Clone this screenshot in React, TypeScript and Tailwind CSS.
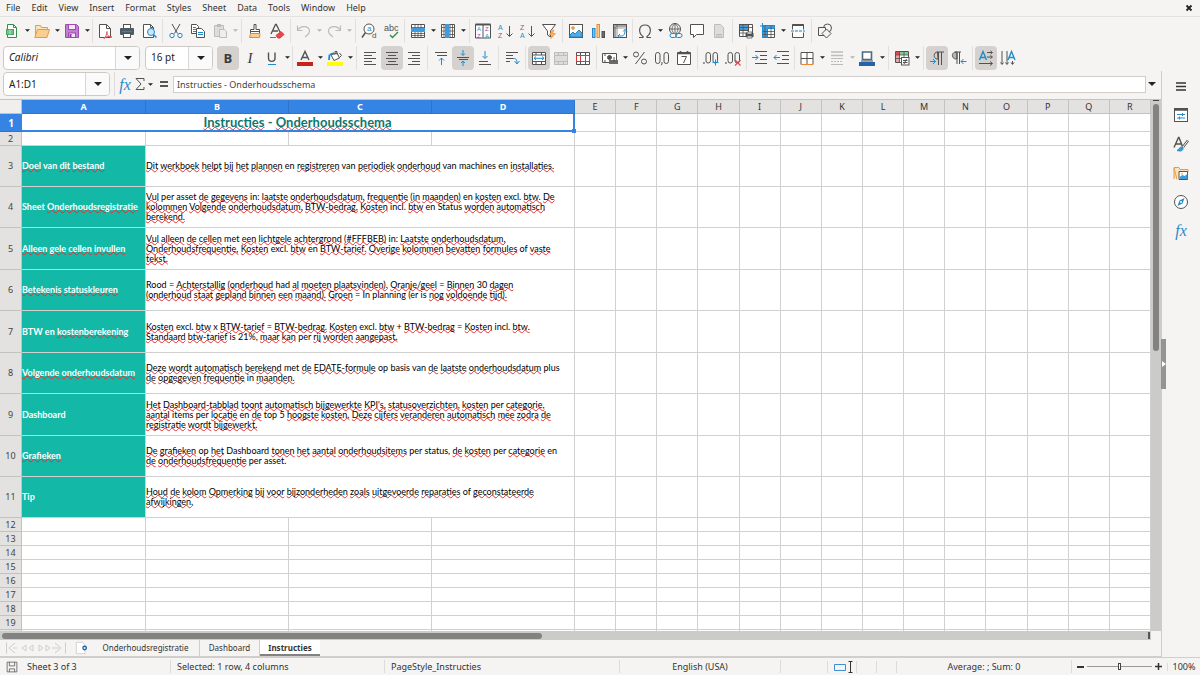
import React from "react";

type Kids = { children?: React.ReactNode };

const K = "#525250";
const B = "#1e8bcd";
const G = "#bcbcba";

function Glyph({ children, className = "h-4 w-4" }: Kids & { className?: string }) {
  return (
    <svg viewBox="0 0 16 16" className={className + " overflow-visible"} fill="none" stroke={K} strokeWidth="1" aria-hidden="true">
      {children}
    </svg>
  );
}

function T({ x, y, s, c, children }: Kids & { x: number; y: number; s: number; c: string }) {
  return (
    <text x={x} y={y} fontSize={s} fill={c} stroke="none" fontFamily="Liberation Sans, sans-serif">
      {children}
    </text>
  );
}

const icons: Record<string, React.ReactNode> = {
  New: (
    <>
      <path d="M3.500 1.500h6l3 3v10h-9z" fill="#fff" stroke="#309048" />
      <path d="M9.500 1.500v3h3" stroke="#309048" />
      <rect x="2" y="6" width="8" height="6" fill="#41a85f" stroke="none" />
      <path d="M3 8h6M3 10h6M6 6.500v5" stroke="#d7f0de" strokeWidth=".7" />
    </>
  ),
  Open: (
    <>
      <path d="M1.500 14V2.500h5l1 2h6v3" fill="#fbe3bd" stroke="#eb9a3c" />
      <path d="M.8 14.500l2.700-8h12l-2.500 8z" fill="#f8cf8f" stroke="#eb9a3c" />
    </>
  ),
  Save: (
    <>
      <path d="M1.500 1.500h11l2 2v11h-13z" fill="#c07fd0" stroke="#a04bb4" />
      <rect x="4.500" y="1.500" width="7" height="5" fill="#f4e8f6" stroke="#a04bb4" />
      <rect x="4.500" y="10" width="7" height="4.500" fill="#f4e8f6" stroke="#a04bb4" />
      <rect x="5.500" y="11" width="2" height="3" fill="#92379f" stroke="none" />
    </>
  ),
  "Export as PDF": (
    <>
      <path d="M2.500 1.500h7l4 4v9h-11z" fill="#fff" />
      <path d="M9.500 1.500v4h4" />
      <path d="M7 15.500c2-2 3.200-5 3-7-.8 3 2 6 5 5.500-3-1.300-6-.5-8 1.500z" fill="#fff" stroke="#e0555c" />
    </>
  ),
  Print: (
    <>
      <rect x="4.500" y="1.500" width="7" height="4" fill="#fff" />
      <rect x="1" y="5" width="14" height="7" rx="1" fill="#4f5a62" stroke="none" />
      <path d="M3 8.500h10" stroke="#1e8bcd" strokeWidth="1.200" />
      <rect x="4.500" y="10.500" width="7" height="4" fill="#fff" />
    </>
  ),
  "Print Preview": (
    <>
      <path d="M2.500 1.500h7l3 3v10h-10z" fill="#fff" />
      <path d="M9.500 1.500v3h3" />
      <circle cx="10" cy="9" r="3.500" fill="#cfe5f5" stroke={B} />
      <path d="M12.500 11.500l3 3" stroke={B} strokeWidth="1.500" />
    </>
  ),
  Cut: (
    <>
      <path d="M4 1l5.500 9.500M12 1L6.500 10.500" />
      <circle cx="4" cy="12.500" r="2.200" stroke={B} />
      <circle cx="12" cy="12.500" r="2.200" stroke={B} />
    </>
  ),
  Copy: (
    <>
      <path d="M1.500 1.500h5l2 2v7h-7z" fill="#fff" />
      <path d="M3 4.500h3M3 6.500h4M3 8.500h3" stroke={B} />
      <path d="M6.500 5.500h5l3 3v6h-8z" fill="#fff" />
      <path d="M8 9.500h5M8 11.500h5" stroke={B} />
    </>
  ),
  Paste: (
    <>
      <path d="M2.500 2.500h9v11h-9z" fill="#dedddb" stroke={G} />
      <rect x="5" y="1" width="4" height="3" fill={G} stroke="none" />
      <path d="M7.500 6.500h5l2 2v6h-7z" fill="#eee" stroke={G} />
    </>
  ),
  "Clone Formatting": (
    <>
      <path d="M7 1.500h2v5h3.500v4h-9v-4H7z" fill="#fff" />
      <path d="M3.500 8.500h9" />
      <path d="M3.500 10.500l-1 4h10l.5-4z" fill="#f8cf8f" stroke="#ed8733" />
    </>
  ),
  "Clear Formatting": (
    <>
      <path d="M2 11L6.500 1.500h.8L11 9M4 8h5" strokeWidth="1.300" />
      <path d="M1 14.500h6" stroke={B} />
      <path d="M7 12.500l5-4 3 3-4 3.500H9z" fill="#e8474c" stroke="#d9363e" />
    </>
  ),
  Undo: <path d="M1.500 2.500v5h5M1.500 7.500c3-5.500 11-5 12 0 .5 3-2 4.500-4.500 6.500" stroke={G} strokeWidth="1.200" />,
  Redo: <path d="M14.500 2.500v5h-5M14.500 7.500c-3-5.500-11-5-12 0-.5 3 2 4.500 4.500 6.500" stroke={G} strokeWidth="1.200" />,
  "Find and Replace": (
    <>
      <circle cx="8" cy="6" r="5" fill="#fff" />
      <path d="M4.500 9.500L1 14.500" strokeWidth="1.500" />
      <T x={6} y={8} s={8} c={B}>a</T>
      <T x={11} y={15} s={8} c={K}>d</T>
    </>
  ),
  Spelling: (
    <>
      <T x={1} y={7.5} s={9} c={K}>abc</T>
      <path d="M7 12l2.500 2.500L15 9" stroke="#309048" strokeWidth="1.400" />
    </>
  ),
  Row: (
    <>
      <path d="M1.500 1.500h13v13h-13z" fill="#fff" />
      <path d="M1.500 4.500h13M1.500 10.500h13M1.500 12.500h13M5 1.500v13M8 1.500v13M11 1.500v13" strokeWidth=".8" />
      <rect x="1" y="5" width="14" height="4" fill="#3f9bdc" stroke="none" />
    </>
  ),
  Column: (
    <>
      <path d="M1.500 1.500h13v13h-13z" fill="#fff" />
      <path d="M1.500 4.500h13M1.500 8h13M1.500 11.500h13M4 1.500v13M10 1.500v13M12.500 1.500v13" strokeWidth=".8" />
      <rect x="5" y="1" width="4.500" height="14" fill="#3f9bdc" stroke="none" />
    </>
  ),
  Sort: (
    <>
      <path d="M.5 1.500h15v13.500H.5zM8 1.500v13" fill="#fff" />
      <path d="M.5 1.500h15" strokeWidth="2" />
      <T x={2} y={8} s={6} c={B}>A</T>
      <T x={2} y={14.5} s={6} c="#b03fb5">Z</T>
      <T x={10} y={8} s={6} c="#b03fb5">Z</T>
      <T x={10} y={14.5} s={6} c={B}>A</T>
    </>
  ),
  "Sort Ascending": (
    <>
      <T x={1} y={6.5} s={7} c={B}>A</T>
      <T x={1} y={15} s={7} c="#b03fb5">Z</T>
      <path d="M12.500 3v10M9.500 10.500l3 3 3-3" />
    </>
  ),
  "Sort Descending": (
    <>
      <T x={1} y={6.5} s={7} c="#b03fb5">Z</T>
      <T x={1} y={15} s={7} c={B}>A</T>
      <path d="M12.500 3v10M9.500 10.500l3 3 3-3" />
    </>
  ),
  AutoFilter: (
    <>
      <path d="M1.500 1.500h13L9.500 8v6l-3-2V8z" fill="#fff" />
      <path d="M12 7l-4 5h3l-1 3.500 4.500-5h-3l1.500-3.500z" fill="#f8b35b" stroke="#ed8733" strokeWidth=".6" />
    </>
  ),
  Image: (
    <>
      <rect x="1.500" y="1.500" width="13" height="13" fill="#fff" />
      <circle cx="5" cy="5" r="1.300" fill="#f8b35b" stroke="#ed8733" />
      <path d="M2 14v-2l3-3 2 2 4-4 3 3v4z" fill="#5da7dc" stroke={B} />
    </>
  ),
  Chart: (
    <>
      <rect x="2.500" y="5.500" width="2.500" height="9" fill="#83beec" stroke={B} />
      <rect x="7" y="1.500" width="2.500" height="13" fill="#f8cf8f" stroke="#ed8733" />
      <rect x="12" y="8.500" width="2.500" height="6" fill="#6a6a68" />
    </>
  ),
  "Pivot Table": (
    <>
      <rect x="1.500" y="1.500" width="13" height="13" fill="#fff" />
      <path d="M2 3h12M3 2v12" stroke="#a3a3a1" strokeWidth="2" />
      <path d="M1.500 5h13M5 1.500v13" strokeWidth=".6" />
      <path d="M6 13h3.500c3 0 3.500-3 3.500-6.500M8 11l-2 2 2 2M11 8.500l2-2 2 2" stroke={B} />
    </>
  ),
  Symbol: <path d="M2 14.500h4v-1C1 10 1.500 2 8 2s7 8 2 11.500v1h4" strokeWidth="1.200" />,
  Hyperlink: (
    <>
      <circle cx="8" cy="6" r="5.500" />
      <path d="M2.500 6h11M8 .5v11M8 .5C4 4 4 8 8 11.500M8 .5c4 3.500 4 7.500 0 11" strokeWidth=".8" />
      <rect x="3" y="10.500" width="6.500" height="4" rx="2" fill="#f5f4f2" stroke={B} />
      <rect x="8.500" y="10.500" width="6.500" height="4" rx="2" stroke={B} />
    </>
  ),
  Comment: <path d="M1.500 1.500h13v10h-7l-3 3v-3h-3z" fill="#fff" />,
  "Headers and Footers": (
    <>
      <path d="M3.500 1.500h6l3 3v10h-9z" fill="#dedddb" stroke={G} />
      <path d="M5 11.500h6M5 13h6" stroke={G} />
    </>
  ),
  "Print Area": (
    <>
      <path d="M1.500 1.500h13v12h-13z" fill="#fff" />
      <rect x="1.500" y="1.500" width="9" height="6" fill="#3f9bdc" />
      <path d="M1.500 4.500h13M1.500 10h13M5 1.500v12M10.500 1.500v12" strokeWidth=".8" />
      <rect x="7.500" y="10" width="8" height="4" fill="#4a5258" stroke="none" />
      <path d="M9 9h5v2H9zM9 13h5v2H9z" fill="#fff" strokeWidth=".8" />
    </>
  ),
  "Freeze Rows and Columns": (
    <>
      <path d="M2.500 2.500h12v12h-12z" fill="#fff" />
      <path d="M2.500 2.500h12v3h-7v9h-5z" fill="#3f9bdc" stroke={B} />
      <path d="M2.500 8.500h12M2.500 11.500h12M11 2.500v12M5 2.500v12" strokeWidth=".8" />
      <path d="M0 3h5M2.500 0v5" stroke={B} />
    </>
  ),
  "Split Window": (
    <>
      <path d="M2.500 6.500v-5h11v5M2.500 9.500v5h11v-5" fill="#fff" />
      <path d="M2.500 2h11" strokeWidth="2" />
      <path d="M1 8h14" stroke={B} strokeDasharray="3 1" />
    </>
  ),
  "Show Draw Functions": (
    <>
      <circle cx="10.500" cy="5" r="4" />
      <path d="M1.500 4.500h7v8h-7z" fill="#f5f4f2" />
      <path d="M9.500 6l4.500 4.500-4.500 4.500L5 10.500z" fill="#f5f4f2" />
    </>
  ),
  Bold: <text x="3.500" y="13" fontSize="13" fontWeight="700" fill="#3c3c3a" stroke="none" fontFamily="Open Sans, sans-serif">B</text>,
  Italic: <text x="5.500" y="13" fontSize="15" fontStyle="italic" fill="#3c3c3a" stroke="none" fontFamily="Liberation Serif, serif">I</text>,
  Underline: (
    <>
      <path d="M4.500 2.500v5.500c0 4.500 6.500 4.500 6.500 0V2.500" strokeWidth="1.400" />
      <path d="M4 14.500h8" stroke={B} />
    </>
  ),
  "Font Color": (
    <>
      <path d="M4 10L8 1.500 12 10M5.500 7.500h5" strokeWidth="1.400" />
      <rect x="0" y="12" width="16" height="4" fill="#c9211e" stroke="none" />
    </>
  ),
  "Highlighting Color": (
    <>
      <path d="M4 5l6-2 2.500 5-5.500 2.500z" fill="#fff" />
      <path d="M2.500 4.500L2 10M3 4.500l4-1.500" stroke={B} strokeWidth="1.800" />
      <path d="M8 4.500V1.500h2v3M12.500 3l2 2.500-2 2" />
      <rect x="0" y="12" width="16" height="4" fill="#ffff00" stroke="none" />
    </>
  ),
  "Align Left": <path d="M2 2.500h12M2 5.500h8M2 8.500h12M2 11.500h8M2 14.500h12" />,
  "Center Horizontally": <path d="M2 2.500h12M4 5.500h8M2 8.500h12M4 11.500h8M2 14.500h12" />,
  "Align Right": <path d="M2 2.500h12M6 5.500h8M2 8.500h12M6 11.500h8M2 14.500h12" />,
  "Align Top": (
    <>
      <path d="M2 2.500h12M4 5.500h10" />
      <path d="M8.500 15V8M6 10.500L8.500 8l2.500 2.500" stroke={B} />
    </>
  ),
  "Center Vertically": (
    <>
      <path d="M2 7.500h12M4 9.500h9" />
      <path d="M8 0v5M6 3.500l2 2 2-2M8 16v-5M6 13l2-2 2 2" stroke={B} />
    </>
  ),
  "Align Bottom": (
    <>
      <path d="M2 11.500h9M2 14.500h12" />
      <path d="M8 1v7M5.500 6L8 8.500 10.500 6" stroke={B} />
    </>
  ),
  "Wrap Text": (
    <>
      <path d="M2 2.500h12M2 5.500h7M2 8.500h7M2 11.500h4" />
      <path d="M9 8.500h1.500c1 0 2.500.5 2.500 4.500M10.500 11l2.500 3 2.500-3" stroke={B} />
    </>
  ),
  "Merge and Center Cells": (
    <>
      <path d="M1.500 2.500h13v12h-13z" fill="#fff" />
      <path d="M1.500 5h13M1.500 11.500h13M5 2.500V5M10.500 2.500V5M5 11.500v3M10.500 11.500v3" />
      <path d="M3 8.300h10M5 6.500L3 8.300 5 10M11 6.500l2 1.800L11 10" stroke={B} />
    </>
  ),
  "Merge Cells": (
    <>
      <path d="M1.500 2.500h13v12h-13z" fill="#dedddb" stroke={G} />
      <path d="M1.500 5.500h13M1.500 11.500h13M5.500 2.500v3M10.500 2.500v3M5.500 11.500v3M10.500 11.500v3" stroke={G} />
    </>
  ),
  "Unmerge Cells": (
    <>
      <path d="M1.500 2.500h13v12h-13z" fill="#fff" />
      <path d="M1.500 5.500h13M1.500 11.500h13M5.500 2.500v3M10.500 2.500v3M5.500 11.500v3M10.500 11.500v3" />
      <path d="M1.500 5.500h13v6h-13zM5.500 5.500v6M10.500 5.500v6" stroke="#d9363e" />
    </>
  ),
  Currency: (
    <>
      <path d="M.5 3.500h14v9H.5z" fill="#fff" />
      <circle cx="7.500" cy="7.500" r="2" fill={K} />
      <path d="M7 10h9v4H7z" fill="#6a6a68" stroke="none" />
      <path d="M12 7v5M2 5h2M2 11h2" />
    </>
  ),
  Percent: (
    <>
      <circle cx="4" cy="4.500" r="2.500" />
      <circle cx="12" cy="11.500" r="2.500" />
      <path d="M12.500 2L3.500 14" />
    </>
  ),
  Number: (
    <>
      <rect x="1.500" y="2.500" width="4.500" height="11" rx="2.200" />
      <rect x="10" y="2.500" width="4.500" height="11" rx="2.200" />
      <path d="M8 12v2l-.8 1.200" />
    </>
  ),
  Date: (
    <>
      <path d="M1.500 2.500h13v12h-13z" fill="#fff" />
      <path d="M1.500 3.500h13M4.500 1v3M11.500 1v3" strokeWidth="1.600" />
      <path d="M5.500 6.500h5l-3 6.500" />
    </>
  ),
  "Add Decimal Place": (
    <>
      <rect x="3" y="2.500" width="4.500" height="10.500" rx="2.200" />
      <rect x="10" y="2.500" width="4.500" height="10.500" rx="2.200" />
      <path d="M.2 13h1.500" strokeWidth="1.400" />
      <path d="M12.500 9.500v6M9.500 12.500h6" stroke={B} />
    </>
  ),
  "Delete Decimal Place": (
    <>
      <rect x="3" y="2.500" width="4.500" height="10.500" rx="2.200" />
      <rect x="10" y="2.500" width="4.500" height="10.500" rx="2.200" />
      <path d="M.2 13h1.500" strokeWidth="1.400" />
      <path d="M10 10l5.500 5.500M15.500 10L10 15.500" stroke="#e8474c" strokeWidth="1.200" />
    </>
  ),
  "Increase Indent": (
    <>
      <path d="M3 1.500h12M8 5.500h7M8 9.500h7M3 13.500h12" />
      <path d="M0 7.500h6M3.500 5L6 7.500 3.500 10" stroke={B} />
    </>
  ),
  "Decrease Indent": (
    <>
      <path d="M3 1.500h12M8 5.500h7M8 9.500h7M3 13.500h12" />
      <path d="M0 7.500h6M2.500 5L0 7.500 2.500 10" stroke={B} />
    </>
  ),
  Borders: (
    <>
      <path d="M2 2.500h12v12H2z" fill="#fff" />
      <path d="M8 2.500v12M2 8.500h12" />
      <path d="M2 14.500h12" stroke="#ed8733" />
    </>
  ),
  "Border Style": (
    <>
      <path d="M2 2h12M2 5.500h12" stroke={G} strokeWidth="1.500" />
      <path d="M2 8.500h12M2 14.500h12" stroke={G} />
      <path d="M2 11.500h12" stroke={G} strokeDasharray="2 1" />
    </>
  ),
  "Border Color": (
    <>
      <path d="M3.500 2h9v7.500h-9z" fill="#fff" stroke="#4a6a85" strokeWidth="1.600" />
      <path d="M2 11h12" stroke={K} />
      <rect x="0" y="12" width="16" height="4" fill="#2563a8" stroke="none" />
    </>
  ),
  "Conditional Formatting": (
    <>
      <path d="M1.500 1.500h13v11h-13z" fill="#fff" />
      <rect x="2" y="2" width="4" height="3" fill="#e8474c" stroke="none" />
      <rect x="6" y="2" width="8" height="3" fill="#83c995" stroke="none" />
      <rect x="2" y="5" width="4" height="7" fill="#e9a3a3" stroke="none" />
      <path d="M1.500 5h13M1.500 8.500h13M5.500 1.500v11M10 1.500v11" strokeWidth=".8" />
      <rect x="7.500" y="7.500" width="7.500" height="7.500" fill="#fff" />
      <path d="M9 10.500h4.500M9 12.500h4.500M12.500 9l-2.500 5" />
    </>
  ),
  "Left to Right": (
    <>
      <path d="M8 2h7M9.500 2v13M12.500 2v13M9 9C4 9.500 4 2 8.500 2z" />
      <path d="M1 11.500h5.500M4 9l2.500 2.500L4 14" stroke={B} />
    </>
  ),
  "Right to Left": (
    <>
      <path d="M6 2v7C0 9.500 0 2 5 2z" fill="#b5b5b3" />
      <path d="M4 2h6M6 2v12M8.500 2v12" />
      <path d="M10 11.500h5.500M12.500 9L10 11.500l2.500 2.500" stroke={B} />
    </>
  ),
  "Text Horizontal": (
    <>
      <path d="M1.500 10L5 1.500 8.500 10M2.500 7.500h5" stroke={B} strokeWidth="1.400" />
      <path d="M9 2.500h5M9 7h5M1 13.500h13M12.500 1L14.500 2.500 12.500 4M12.500 5.500l2 1.500-2 1.500M12 11.500l2.500 2-2.500 2" />
    </>
  ),
  "Text Vertical": (
    <>
      <path d="M8 10l3.500-8.500L15 10M9 7.500h5" stroke={B} strokeWidth="1.400" />
      <path d="M2 1v13M7 1v13M12.500 11v3M.5 12.500l1.500 2 1.500-2M5.500 12.500l1.500 2 1.500-2M11 12.500l1.500 2 1.500-2" />
    </>
  ),
  Properties: (
    <>
      <rect x="1.500" y="1.500" width="13" height="13" fill="#fff" />
      <path d="M1.500 2.500h13" strokeWidth="2.500" />
      <path d="M4 7.500h8M4 11h8" stroke={B} />
      <path d="M9.500 6v3M6.500 9.500v3" stroke={B} />
    </>
  ),
  Styles: (
    <>
      <path d="M1 11.500L5.500 1.500h.5l3.500 9M3 8h6" strokeWidth="1.400" />
      <path d="M15 4.500L10 11" strokeWidth="2.500" />
      <path d="M15 4.500L10 11" stroke="#fff" strokeWidth="1" />
      <path d="M4 14.500c2-.5 2-3.500 5-3.500 2 1 1 4-2 4z" fill="#3f9bdc" stroke={B} />
    </>
  ),
  Gallery: (
    <>
      <path d="M1 14V2.500h5l1 2h8V7" fill="#fbe3bd" stroke="#eb9a3c" />
      <path d="M1 3l3 11.500" stroke="#eb9a3c" />
      <path d="M6 6.500h8.500v8H6z" fill="#fff" />
      <path d="M6.500 14v-2l3-2 2 1 3-2v5z" fill="#3f9bdc" stroke="none" />
      <circle cx="9" cy="9" r=".8" fill="#ed8733" stroke="none" />
    </>
  ),
  Navigator: (
    <>
      <circle cx="8" cy="8" r="6.500" fill="#fff" />
      <path d="M11.500 4L9.500 9.500 4.500 12l2-5.500z" fill="#1e8bcd" stroke="none" />
      <circle cx="8" cy="8" r="1" fill="#fff" stroke="none" />
    </>
  ),
};

function Tool({ name, active, caret, dim }: { name: string; active?: boolean; caret?: boolean; dim?: boolean }) {
  return (
    <>
      <button
        type="button"
        aria-label={name}
        className={active ? "flex h-6 w-[22px] shrink-0 items-center justify-center rounded-sm bg-[#d4d1ce]" : "flex h-6 w-[22px] shrink-0 items-center justify-center"}
      >
        <Glyph>{icons[name]}</Glyph>
      </button>
      {caret && (
        <button type="button" aria-label={name + " options"} className="flex h-6 w-2 shrink-0 items-center justify-center">
          <Caret dim={dim} />
        </button>
      )}
    </>
  );
}

function Caret({ dim, big }: { dim?: boolean; big?: boolean }) {
  return (
    <svg viewBox="0 0 8 4" className={big ? "h-1 w-2" : "h-[3px] w-[5px]"} fill={dim ? "#b5b5b3" : "#222"} aria-hidden="true">
      <path d="M0 0h8L4 4z" />
    </svg>
  );
}

function Sep({ tight }: { tight?: boolean }) {
  return <div className={(tight ? "mx-px" : "mx-0.5") + " h-6 w-px shrink-0 bg-[#e2e0de]"} />;
}

function Combo({ label, value, width, italic }: { label: string; value: string; width: string; italic?: boolean }) {
  return (
    <div className={width + " flex h-6 shrink-0 overflow-hidden rounded border border-[#cdc9c5] bg-white"}>
      <input
        aria-label={label}
        defaultValue={value}
        className={(italic ? "italic " : "") + "min-w-0 flex-1 bg-transparent px-[5px] text-[10px] text-[#222] outline-none"}
      />
      <button type="button" aria-label={label + " list"} className="flex w-6 items-center justify-center border-l border-[#d9d6d3] bg-[#fafafa]">
        <Caret big />
      </button>
    </div>
  );
}

const menus = ["File", "Edit", "View", "Insert", "Format", "Styles", "Sheet", "Data", "Tools", "Window", "Help"];
const letters = "ABCDEFGHIJKLMNOPQR".split("");

/* Words the spelling checker accepts; everything else gets a red wave. */
const accepted = new Set(
  "van en per asset excl. incl. in: Status met Rood had = + x is 21%, In planning (er op basis plus in items top 5 asset. status, Dashboard machines of 30 Sheet BTW Tip -".split(" "),
);

function Checked({ text }: { text: string }) {
  return (
    <>
      {text.split(" ").map((w, i) => (
        <React.Fragment key={i}>
          {i > 0 && " "}
          {accepted.has(w) ? (
            w
          ) : (
            <span className="underline decoration-[#e03030] decoration-wavy decoration-1 underline-offset-[-1px] [text-decoration-skip-ink:none]">{w}</span>
          )}
        </React.Fragment>
      ))}
    </>
  );
}

type Entry = { tall: boolean; title: string; lines: string[] };

const entries: Entry[] = [
  { tall: false, title: "Doel van dit bestand", lines: ["Dit werkboek helpt bij het plannen en registreren van periodiek onderhoud van machines en installaties."] },
  {
    tall: false,
    title: "Sheet Onderhoudsregistratie",
    lines: [
      "Vul per asset de gegevens in: laatste onderhoudsdatum, frequentie (in maanden) en kosten excl. btw. De",
      "kolommen Volgende onderhoudsdatum, BTW-bedrag, Kosten incl. btw en Status worden automatisch",
      "berekend.",
    ],
  },
  {
    tall: true,
    title: "Alleen gele cellen invullen",
    lines: [
      "Vul alleen de cellen met een lichtgele achtergrond (#FFFBEB) in: Laatste onderhoudsdatum,",
      "Onderhoudsfrequentie, Kosten excl. btw en BTW-tarief. Overige kolommen bevatten formules of vaste",
      "tekst.",
    ],
  },
  {
    tall: false,
    title: "Betekenis statuskleuren",
    lines: [
      "Rood = Achterstallig (onderhoud had al moeten plaatsvinden). Oranje/geel = Binnen 30 dagen",
      "(onderhoud staat gepland binnen een maand). Groen = In planning (er is nog voldoende tijd).",
    ],
  },
  {
    tall: true,
    title: "BTW en kostenberekening",
    lines: ["Kosten excl. btw x BTW-tarief = BTW-bedrag. Kosten excl. btw + BTW-bedrag = Kosten incl. btw.", "Standaard btw-tarief is 21%, maar kan per rij worden aangepast."],
  },
  {
    tall: false,
    title: "Volgende onderhoudsdatum",
    lines: ["Deze wordt automatisch berekend met de EDATE-formule op basis van de laatste onderhoudsdatum plus", "de opgegeven frequentie in maanden."],
  },
  {
    tall: true,
    title: "Dashboard",
    lines: [
      "Het Dashboard-tabblad toont automatisch bijgewerkte KPI's, statusoverzichten, kosten per categorie,",
      "aantal items per locatie en de top 5 hoogste kosten. Deze cijfers veranderen automatisch mee zodra de",
      "registratie wordt bijgewerkt.",
    ],
  },
  { tall: false, title: "Grafieken", lines: ["De grafieken op het Dashboard tonen het aantal onderhoudsitems per status, de kosten per categorie en", "de onderhoudsfrequentie per asset."] },
  { tall: false, title: "Tip", lines: ["Houd de kolom Opmerking bij voor bijzonderheden zoals uitgevoerde reparaties of geconstateerde", "afwijkingen."] },
];

const cell = "border-b border-r border-[#d0d0d0] p-0";
const rowHead = "border-b border-r border-[#c2c2c0] bg-[#e3e2e0] p-0 text-center text-[9px] leading-3 font-normal text-[#444]";

function Blank({ n }: { n: number }) {
  return (
    <>
      {Array.from({ length: n }, (_, i) => (
        <td key={i} className={cell} />
      ))}
    </>
  );
}

function Sheet() {
  return (
    <table className="w-full table-fixed border-separate border-spacing-0">
      <colgroup>
        <col className="w-[22px]" />
        <col className="w-[124px]" />
        <col className="w-[143px]" />
        <col className="w-[143px]" />
        <col className="w-[143px]" />
      </colgroup>
      <thead>
        <tr className="h-3.5">
          <td className="border-r border-b border-[#c2c2c0] bg-[#f0efee] p-0" />
          {letters.map((l, i) => (
            <th
              key={l}
              scope="col"
              className={
                i < 4
                  ? "border-r border-b border-[#2f74c9] bg-[#3584e4] p-0 text-[9px] leading-3 font-bold text-white"
                  : "border-r border-b border-[#c2c2c0] bg-[#e3e2e0] p-0 text-[9px] leading-3 font-normal text-[#333]"
              }
            >
              {l}
            </th>
          ))}
        </tr>
      </thead>
      <tbody>
        <tr className="h-[18px]">
          <th scope="row" className="border-b border-[#2f74c9] bg-[#3584e4] p-0 text-[10px] leading-3 font-bold text-white">1</th>
          <td colSpan={4} className="relative border-r-2 border-b-2 border-[#3584e4] bg-white p-0 text-center font-[Lato] text-[13px] leading-4 font-bold text-[#0f766e]">
            <Checked text="Instructies - Onderhoudsschema" />
            <span className="absolute -right-[3px] -bottom-[3px] size-1 bg-[#3584e4]" />
          </td>
          <Blank n={14} />
        </tr>
        <tr className="h-3.5">
          <th scope="row" className={rowHead}>2</th>
          <Blank n={18} />
        </tr>
        {entries.map((e, i) => (
          <tr key={e.title} className={e.tall ? "h-[42px]" : "h-[41px]"}>
            <th scope="row" className={rowHead}>{i + 3}</th>
            <td className={cell + " bg-[#14b8a6] text-left font-[Lato] text-[9px] leading-[10px] font-bold whitespace-nowrap text-white"}>
              <Checked text={e.title} />
            </td>
            <td colSpan={3} className={cell + " font-[Lato] text-[9px] leading-[10px] whitespace-nowrap text-black"}>
              {e.lines.map((l) => (
                <div key={l}>
                  <Checked text={l} />
                </div>
              ))}
            </td>
            <Blank n={14} />
          </tr>
        ))}
        {Array.from({ length: 9 }, (_, i) => (
          <tr key={i} className="h-3.5">
            <th scope="row" className={rowHead}>{i + 12}</th>
            <Blank n={18} />
          </tr>
        ))}
      </tbody>
    </table>
  );
}

function Fx() {
  return <span className="font-['Liberation_Serif',serif] text-[16px] leading-4 text-[#1e8bcd] italic">fx</span>;
}

export default function App() {
  return (
    <div className="flex h-screen flex-col overflow-hidden bg-[#f5f4f2] font-['Noto_Sans',sans-serif] text-[#333]">
      <nav className="flex h-[17px] shrink-0 items-center border-b border-[#e4e2e0] pr-[7px] pl-1.5 text-[9px]">
        <div className="flex flex-1 gap-[11px]">
          {menus.map((m) => (
            <button type="button" key={m}>{m}</button>
          ))}
        </div>
        <button type="button" aria-label="Close document">
          <svg viewBox="0 0 8 8" className="size-2" stroke="#222" strokeWidth="1.800" aria-hidden="true">
            <path d="M1.500 1.500l5 5M6.500 1.500l-5 5" />
          </svg>
        </button>
      </nav>

      <div className="flex h-[27px] shrink-0 items-center pl-px">
        <Tool name="New" caret />
        <Tool name="Open" caret />
        <Tool name="Save" caret />
        <Sep tight />
        <Tool name="Export as PDF" />
        <Tool name="Print" />
        <Tool name="Print Preview" />
        <Sep />
        <Tool name="Cut" />
        <Tool name="Copy" />
        <Tool name="Paste" caret dim />
        <Sep />
        <Tool name="Clone Formatting" />
        <Tool name="Clear Formatting" />
        <Sep />
        <Tool name="Undo" caret dim />
        <Tool name="Redo" caret dim />
        <Sep />
        <Tool name="Find and Replace" />
        <Tool name="Spelling" />
        <Sep />
        <Tool name="Row" caret />
        <Tool name="Column" caret />
        <Sep />
        <Tool name="Sort" />
        <Tool name="Sort Ascending" />
        <Tool name="Sort Descending" />
        <Tool name="AutoFilter" />
        <Sep />
        <Tool name="Image" />
        <Tool name="Chart" />
        <Tool name="Pivot Table" />
        <Sep tight />
        <Tool name="Symbol" caret />
        <Tool name="Hyperlink" />
        <Tool name="Comment" />
        <Tool name="Headers and Footers" />
        <Sep />
        <Tool name="Print Area" />
        <Tool name="Freeze Rows and Columns" caret />
        <Tool name="Split Window" />
        <Sep />
        <Tool name="Show Draw Functions" />
      </div>

      <div className="flex h-[27px] shrink-0 items-center pl-[3px]">
        <Combo label="Font Name" value="Calibri" width="w-[137px]" italic />
        <div className="w-[5px]" />
        <Combo label="Font Size" value="16 pt" width="w-[68px]" />
        <div className="w-1" />
        <Tool name="Bold" active />
        <Tool name="Italic" />
        <Tool name="Underline" caret />
        <Sep tight />
        <Tool name="Font Color" caret />
        <Tool name="Highlighting Color" caret />
        <Sep />
        <Tool name="Align Left" />
        <Tool name="Center Horizontally" active />
        <Tool name="Align Right" />
        <Sep />
        <Tool name="Align Top" />
        <Tool name="Center Vertically" active />
        <Tool name="Align Bottom" />
        <Sep />
        <Tool name="Wrap Text" />
        <Sep />
        <Tool name="Merge and Center Cells" active />
        <Tool name="Merge Cells" />
        <Tool name="Unmerge Cells" />
        <Sep />
        <Tool name="Currency" caret />
        <Tool name="Percent" />
        <Tool name="Number" />
        <Tool name="Date" />
        <Sep />
        <Tool name="Add Decimal Place" />
        <Tool name="Delete Decimal Place" />
        <Sep />
        <Tool name="Increase Indent" />
        <Tool name="Decrease Indent" />
        <Sep tight />
        <Tool name="Borders" caret />
        <Tool name="Border Style" caret dim />
        <Tool name="Border Color" caret />
        <Sep />
        <Tool name="Conditional Formatting" caret />
        <Sep />
        <Tool name="Left to Right" active />
        <Tool name="Right to Left" />
        <Sep />
        <Tool name="Text Horizontal" active />
        <Tool name="Text Vertical" />
      </div>

      <div className="flex min-h-0 flex-1">
        <div className="flex min-w-0 flex-1 flex-col">
          <div className="flex h-7 shrink-0 items-center pr-[5px] pb-0.5 pl-[3px]">
            <Combo label="Name Box" value="A1:D1" width="w-[107px]" />
            <div className="ml-1 h-6 w-px bg-[#dedcda]" />
            <button type="button" aria-label="Function Wizard" className="w-5"><Fx /></button>
            <button type="button" aria-label="Select Function" className="flex w-5 items-center gap-[3px]">
              <svg viewBox="0 0 10 12" className="h-3 w-2.5" fill="none" stroke={K} aria-hidden="true">
                <path d="M9 3V.5H1L6 6l-5 5.500h8V9" />
              </svg>
              <Caret />
            </button>
            <button type="button" aria-label="Formula" className="flex w-[18px] flex-col items-center gap-0.5">
              <span className="h-[2px] w-2 bg-[#555]" />
              <span className="h-[2px] w-2 bg-[#555]" />
            </button>
            <input aria-label="Input line" defaultValue="Instructies - Onderhoudsschema" className="h-[17px] min-w-0 flex-1 border border-[#d0cdca] bg-white px-[3px] text-[9px] text-[#444] outline-none" />
            <button type="button" aria-label="Expand Formula Bar" className="ml-0.5 flex h-4 w-2 items-center justify-center"><Caret big /></button>
          </div>

          <div className="flex min-h-0 flex-1 border-t border-[#c2c2c0]">
            <div className="min-w-0 flex-1 overflow-hidden bg-white"><Sheet /></div>
            <div className="flex w-2.5 shrink-0 flex-col items-center gap-[3px] bg-[#cbcbca]">
              <div className="h-px w-[6px] bg-[#444]" />
              <div className="h-[247px] w-[6px] rounded-full bg-[#828280]" />
            </div>
          </div>

          <div className="flex h-[9px] shrink-0 pr-2.5">
            <div className="flex flex-1 items-center justify-between bg-[#cbcbca] pl-0.5">
              <div className="h-[6px] w-[47%] rounded-full bg-[#828280]" />
              <div className="mr-px h-[7px] w-0.5 bg-[#555]" />
            </div>
          </div>

          <div className="flex h-[17px] shrink-0 items-center border-b border-[#d0cecc] text-[8px]">
            <svg viewBox="0 0 62 14" className="ml-[5px] h-3.5 w-[62px]" fill="none" stroke="#cfcdcb" aria-hidden="true">
              <path d="M1.500 1.500v11M10 2L4 7l6 5M8 7h4M21 4l-4 3 4 3zM28 4l-4 3 4 3zM34 4l4 3-4 3zM41 4l4 3-4 3zM50 2l6 5-6 5M47 7h7M60.500 1.500v11" />
            </svg>
            <button type="button" aria-label="Add sheet" className="ml-[7px] w-4">
              <Glyph className="h-3.5 w-4">
                <path d="M1.500 1.500h7l3 3v10h-10z" fill="#fff" stroke="#cfcdcb" />
                <circle cx="11" cy="8" r="2" stroke="#2563a8" strokeWidth="1.500" />
              </Glyph>
            </button>
            <button type="button" className="ml-0.5 h-full w-[108px] border-r border-[#d0cecc]">Onderhoudsregistratie</button>
            <button type="button" className="h-full w-[60px] border-r border-[#d0cecc]">Dashboard</button>
            <button type="button" className="h-full w-[60px] border-b-2 border-[#828280] bg-white pt-0.5 font-bold">Instructies</button>
          </div>
        </div>

        <aside className="relative flex w-[39px] shrink-0 flex-col items-center gap-[5px] border-l border-[#cfcdcb] pt-[3px]">
          <button type="button" aria-label="Sidebar Settings" className="flex h-6 w-6 items-center justify-center">
            <svg viewBox="0 0 10 9" className="h-[9px] w-2.5" stroke="#333" strokeWidth="1.500" aria-hidden="true">
              <path d="M0 1h10M0 4.500h10M0 8h10" />
            </svg>
          </button>
          {["Properties", "Styles", "Gallery", "Navigator"].map((n) => (
            <button type="button" key={n} aria-label={n} className="flex h-6 w-6 items-center justify-center">
              <Glyph>{icons[n]}</Glyph>
            </button>
          ))}
          <button type="button" aria-label="Functions" className="flex h-6 w-6 items-center justify-center"><Fx /></button>
          <button type="button" aria-label="Hide sidebar" className="absolute top-[268px] -left-px flex h-[50px] w-[5px] items-center justify-center bg-[#949492]">
            <svg viewBox="0 0 4 6" className="h-1.5 w-1" fill="#fff" aria-hidden="true"><path d="M0 0l4 3-4 3z" /></svg>
          </button>
        </aside>
      </div>

      <footer className="flex h-[18px] shrink-0 items-center border-t border-[#d0cecc] text-[9px]">
        <div className="flex w-[171px] items-center gap-[9px] border-r border-[#dedcda] pl-1.5">
          <Glyph className="size-3">
            <path d="M1.500 1.500h13v13h-13zM4.500 1.500v5h7v-5M4.500 14.500v-4h7v4" />
          </Glyph>
          Sheet 3 of 3
        </div>
        <div className="w-[214px] border-r border-[#dedcda] pl-1.5">Selected: 1 row, 4 columns</div>
        <div className="w-[235px] border-r border-[#dedcda] pl-1.5">PageStyle_Instructies</div>
        <div className="w-[161px] border-r border-[#dedcda] text-center">English (USA)</div>
        <div className="min-w-0 flex-1" />
        <div className="flex w-[30px] shrink-0 items-center border-x border-[#dedcda] pl-1.5">
          <svg viewBox="0 0 20 12" className="h-3 w-5" fill="none" stroke="#333" aria-hidden="true">
            <path d="M.5 3.500h11v6H.5z" stroke="#3f8fd0" />
            <path d="M14.500.5h4M14.500 11.500h4M16.500.5v11" />
          </svg>
        </div>
        <div className="h-3 w-5 border-r border-[#dedcda]" />
        <div className="h-3 w-5 border-r border-[#dedcda]" />
        <div className="w-[175px] border-r border-[#dedcda] text-center">Average: ; Sum: 0</div>
        <div className="flex w-24 items-center gap-[3px] border-r border-[#dedcda] pl-[5px]">
          <button type="button" aria-label="Zoom out" className="h-0.5 w-[7px] shrink-0 bg-[#333]" />
          <input
            type="range"
            aria-label="Zoom"
            className="h-2 w-[65px] appearance-none bg-[linear-gradient(#999,#999)] bg-[length:100%_1px] bg-center bg-no-repeat [&::-webkit-slider-thumb]:h-[7px] [&::-webkit-slider-thumb]:w-[3px] [&::-webkit-slider-thumb]:appearance-none [&::-webkit-slider-thumb]:border [&::-webkit-slider-thumb]:border-[#444] [&::-webkit-slider-thumb]:bg-white"
          />
          <button type="button" aria-label="Zoom in" className="shrink-0">
            <svg viewBox="0 0 7 7" className="size-[7px]" stroke="#333" strokeWidth="1.500" aria-hidden="true"><path d="M0 3.500h7M3.500 0v7" /></svg>
          </button>
        </div>
        <div className="w-8 text-center">100%</div>
      </footer>
    </div>
  );
}
